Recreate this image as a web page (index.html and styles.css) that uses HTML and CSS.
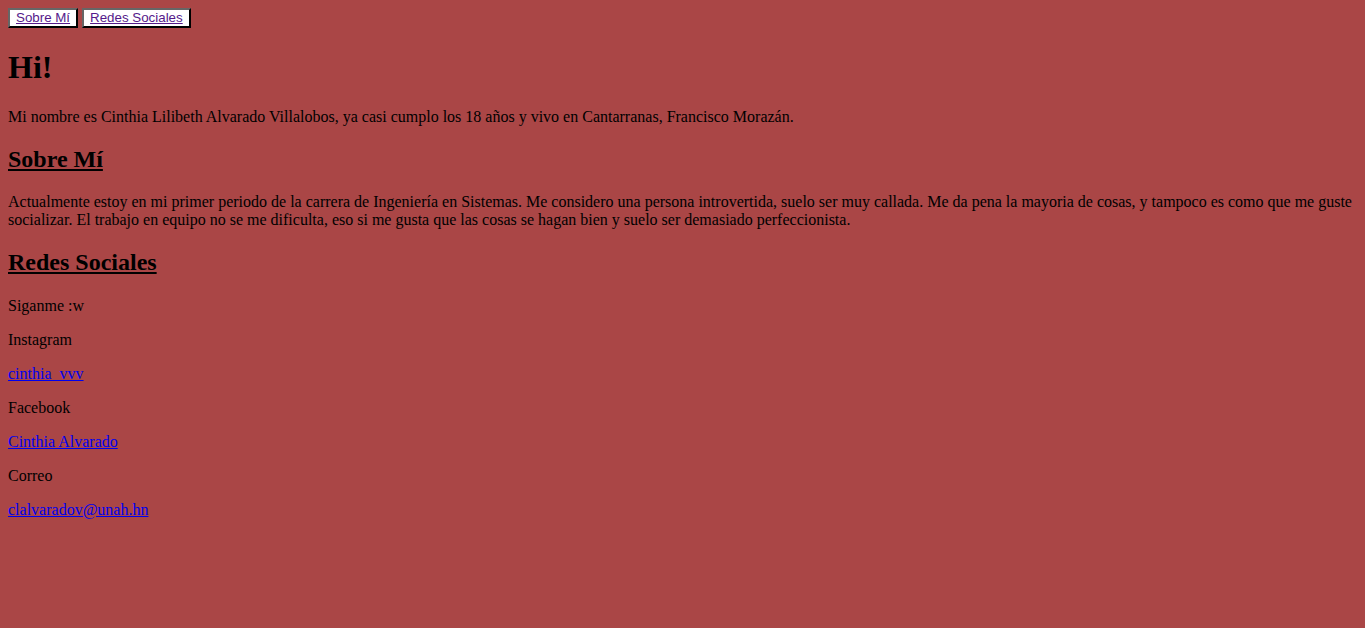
FILE: index.html
```html
<!DOCTYPE html>
<html lang="es">
<head>
<meta charset="utf-8">
<title>Cinthia</title>
<link rel="stylesheet" href="styles.css">
</head>
<body class="page">
<nav class="nav">
<button class="nav-btn"><a class="nav-link" href="#sobre">Sobre Mí</a></button>
<button class="nav-btn"><a class="nav-link" href="#redes">Redes Sociales</a></button>
</nav>
<h1 class="title">Hi!</h1>
<p class="text">Mi nombre es Cinthia Lilibeth Alvarado Villalobos, ya casi cumplo los 18 años y vivo en Cantarranas, Francisco Morazán.</p>
<h2 class="section" id="sobre">Sobre Mí</h2>
<p class="text">Actualmente estoy en mi primer periodo de la carrera de Ingeniería en Sistemas. Me considero una persona introvertida, suelo ser muy callada. Me da pena la mayoria de cosas, y tampoco es como que me guste socializar. El trabajo en equipo no se me dificulta, eso si me gusta que las cosas se hagan bien y suelo ser demasiado perfeccionista.</p>
<h2 class="section" id="redes">Redes Sociales</h2>
<p class="text">Siganme :w</p>
<p class="text">Instagram</p>
<p class="text"><a class="link" href="#">cinthia_vvv</a></p>
<p class="text">Facebook</p>
<p class="text"><a class="link" href="#">Cinthia Alvarado</a></p>
<p class="text">Correo</p>
<p class="text"><a class="link" href="#">clalvaradov@unah.hn</a></p>
</body>
</html>
```
FILE: styles.css
```css
html {
  background: #aa4646;
}
.page {
  margin: 8px;
  background: #aa4646;
  color: #000;
  font-family: "Liberation Serif", "Times New Roman", serif;
  font-size: 16px;
}
.nav {
  display: flex;
  align-items: flex-start;
  gap: 4px;
}
.nav-btn {
  font-family: "Liberation Sans", Arial, sans-serif;
  font-size: 13.333px;
  background: #fff;
  border: 2px solid;
  border-color: #666 #000 #000 #666;
  padding: 0 6px;
  margin: 0;
  height: 20px;
  line-height: 16px;
  box-sizing: border-box;
}
.nav-link {
  color: #551a8b;
  text-decoration: underline;
}
.title {
  font-size: 32px;
  font-weight: bold;
  margin: 21.44px 0;
}
.section {
  font-size: 24px;
  font-weight: bold;
  text-decoration: underline;
  margin: 19.92px 0 20.6px;
}
.text {
  margin: 16px 0;
}
.link {
  color: #0000ee;
  text-decoration: underline;
}
```
